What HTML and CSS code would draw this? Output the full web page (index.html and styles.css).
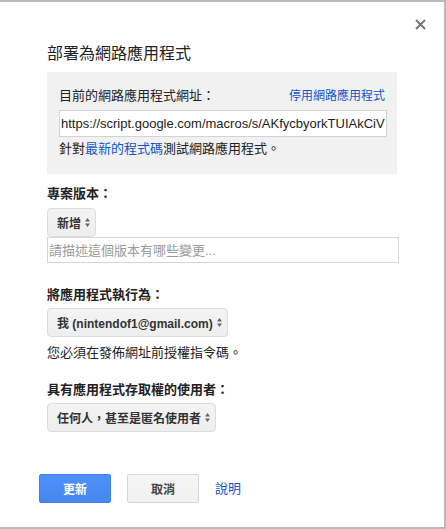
FILE: index.html
```html
<!DOCTYPE html>
<html>
<head>
	<meta charset="utf-8">
	<title>部署為網路應用程式</title>
	<link rel="stylesheet" href="styles.css">
</head>
<body>
	<div class="dialog">
		<button class="close" aria-label="關閉">
			<svg width="11" height="11" viewBox="0 0 11 11"><path d="M1 1L10 10M10 1L1 10" stroke="#777" stroke-width="2" fill="none"/></svg>
		</button>

		<h1 class="title">部署為網路應用程式</h1>

		<div class="current">
			<div class="current-head">
				<span>目前的網路應用程式網址：</span>
				<a class="link link-small" href="#">停用網路應用程式</a>
			</div>
			<input class="url" type="text" readonly value="https://script.google.com/macros/s/AKfycbyorkTUIAkCiVIqP0xExampleDeployId/exec">
			<p class="hint">針對<a class="link" href="#">最新的程式碼</a>測試網路應用程式。</p>
		</div>

		<div class="label label-first">專案版本：</div>
		<div class="select">新增<svg class="arrows" width="5" height="9" viewBox="0 0 5 9"><path d="M0 3.5L2.5 0L5 3.5ZM0 5.5L2.5 9L5 5.5Z" fill="#666"/></svg></div>
		<input class="notes" type="text" placeholder="請描述這個版本有哪些變更...">

		<div class="label label-run">將應用程式執行為：</div>
		<div class="select">我 (nintendof1@gmail.com)<svg class="arrows" width="5" height="9" viewBox="0 0 5 9"><path d="M0 3.5L2.5 0L5 3.5ZM0 5.5L2.5 9L5 5.5Z" fill="#666"/></svg></div>
		<p class="note">您必須在發佈網址前授權指令碼。</p>

		<div class="label label-access">具有應用程式存取權的使用者：</div>
		<div class="select">任何人，甚至是匿名使用者<svg class="arrows" width="5" height="9" viewBox="0 0 5 9"><path d="M0 3.5L2.5 0L5 3.5ZM0 5.5L2.5 9L5 5.5Z" fill="#666"/></svg></div>

		<div class="actions">
			<button class="btn btn-primary">更新</button>
			<button class="btn">取消</button>
			<a class="link help" href="#">說明</a>
		</div>
	</div>
</body>
</html>
```

FILE: styles.css
```css
body, html {
	margin: 0;
	padding: 0;
	background: #fff;
}

body {
	font-family: "Liberation Sans", "Noto Sans CJK TC", sans-serif;
	font-size: 13px;
	color: #222;
}

.dialog {
	position: relative;
	box-sizing: border-box;
	width: 446px;
	height: 529px;
	border: 2px solid #b9b9b9;
	border-left: none;
	padding: 42px 0 0 47px;
	background: #fff;
}

.close {
	position: absolute;
	top: 17px;
	right: 18px;
	padding: 0;
	border: 0;
	background: none;
	width: 11px;
	height: 11px;
	display: block;
	cursor: pointer;
}

.close svg {
	display: block;
}

.title {
	margin: 0;
	font-size: 16px;
	line-height: 20px;
	font-weight: normal;
	color: #222;
}

.link {
	color: #15c;
	text-decoration: none;
}

.link-small {
	font-size: 12px;
	margin-right: 2px;
}

.current {
	box-sizing: border-box;
	width: 350px;
	margin-top: 8px;
	padding: 15px 10px 16px 12px;
	background: #f1f1f1;
}

.current-head {
	display: flex;
	justify-content: space-between;
	align-items: center;
	line-height: 18px;
}

.url {
	display: block;
	box-sizing: border-box;
	width: 100%;
	height: 27px;
	margin: 5px 0 0;
	padding: 0 1px;
	border: 1px solid #d3d3d3;
	background: #fff;
	font-family: inherit;
	font-size: 13px;
	color: #222;
	outline: none;
}

.hint {
	margin: 3px 0 0;
	line-height: 18px;
}

.label {
	font-weight: bold;
	line-height: 18px;
}

.label-first {
	margin-top: 11px;
}

.label-run {
	margin-top: 23px;
}

.label-access {
	margin-top: 19px;
}

.select {
	display: flex;
	width: max-content;
	box-sizing: border-box;
	align-items: center;
	gap: 4px;
	height: 29px;
	margin-top: 4px;
	padding: 0 5px 0 9px;
	border: 1px solid #dcdcdc;
	border-radius: 4px;
	background: linear-gradient(#f3f3f3, #eeeeee);
	font-size: 12px;
	font-weight: bold;
	color: #333;
}

.label-first + .select {
	margin-top: 5px;
}

.arrows {
	display: block;
	flex: none;
}

.notes {
	display: block;
	box-sizing: border-box;
	width: 352px;
	height: 26px;
	margin: 0;
	padding: 0 1px;
	border: 1px solid #d6d6d6;
	font-family: inherit;
	font-size: 13px;
	color: #222;
	outline: none;
}

.notes::placeholder {
	color: #9a9a9a;
}

.note {
	margin: 7px 0 0;
	line-height: 18px;
}

.actions {
	display: flex;
	align-items: center;
	margin: 42px 0 0 -8px;
}

.btn {
	box-sizing: border-box;
	width: 72px;
	height: 29px;
	margin: 0 16px 0 0;
	padding: 0;
	border: 1px solid #d6d6d6;
	border-radius: 2px;
	background: linear-gradient(#f5f5f5, #f1f1f1);
	font-family: inherit;
	font-size: 12px;
	font-weight: bold;
	color: #444;
	cursor: pointer;
}

.btn-primary {
	border-color: #3b82ee;
	background: linear-gradient(#4d90fe, #4787ed);
	color: #fff;
}

.help {
	margin-left: 0;
	font-size: 13px;
	line-height: 18px;
}
```
